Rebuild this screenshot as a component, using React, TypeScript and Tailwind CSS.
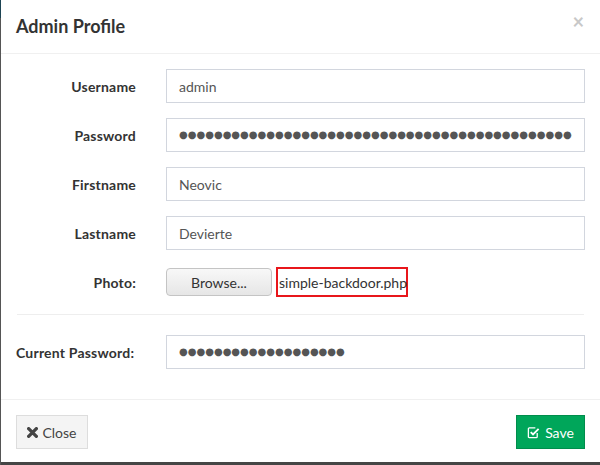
import React from "react";

const font = { fontFamily: "Lato, 'Open Sans', 'Noto Sans', sans-serif" };

function Row({ label, children, left }: { label: string; children: React.ReactNode; left?: boolean }) {
  return (
    <div className="flex items-center mb-[15px] h-[34px]">
      <div className={`w-[135px] shrink-0 pr-[15px] text-[14px] font-bold text-[#333] tracking-[0.2px] ${left ? "text-left" : "text-right"}`}>{label}</div>
      <div className="flex-1 pl-[15px] flex items-center h-full min-w-0">{children}</div>
    </div>
  );
}

function TextBox({ value }: { value: string }) {
  return (
    <div className="w-full h-[34px] border border-[#d2d6de] bg-white px-[12px] flex items-center text-[14px] text-[#555]">
      {value}
    </div>
  );
}

function Dots({ n }: { n: number }) {
  return (
    <div className="w-full min-w-0 h-[34px] border border-[#d2d6de] bg-white pl-[12px] pr-[12px] flex items-center overflow-hidden">
      <div
        className="flex-1 min-w-0 whitespace-nowrap overflow-hidden text-[#555] text-[10px] leading-none"
        style={{ fontFamily: "'DejaVu Sans', sans-serif" }}
      >
        {"●".repeat(n)}
      </div>
    </div>
  );
}

export default function App() {
  return (
    <div className="w-[600px] h-[465px] flex bg-[#454545] overflow-hidden" style={font}>
      <div className="w-[1px] flex flex-col shrink-0">
        <div className="h-[18px] bg-[#1d4454]" />
        <div className="flex-1 bg-[#555]" />
      </div>
      <div className="flex-1 min-w-0 h-[462px] bg-white flex flex-col">
        <div className="h-[54px] border-b border-[#f0f0f0] px-[15px] flex items-center justify-between">
          <div className="text-[18px] font-bold text-[#333] mt-[-1px]">Admin Profile</div>
          <div className="text-[20px] font-bold text-[#c8c8c8] leading-none mt-[-12px] mr-[1px]">×</div>
        </div>
        <div className="pt-[15px] px-[15px] pb-[15px] border-b border-[#f0f0f0]">
          <Row label="Username"><TextBox value="admin" /></Row>
          <Row label="Password"><Dots n={60} /></Row>
          <Row label="Firstname"><TextBox value="Neovic" /></Row>
          <Row label="Lastname"><TextBox value="Devierte" /></Row>
          <Row label="Photo:">
            <div className="flex items-center gap-[4px]">
              <div className="w-[106px] h-[28px] rounded-[4px] border border-[#c4c4c4] bg-gradient-to-b from-[#f8f8f8] to-[#e6e6e6] flex items-center justify-center text-[14px] text-[#333]">Browse...</div>
              <div className="h-[30px] w-[132px] border-2 border-[#e8161b] flex items-center pl-[1px] text-[14px] text-[#333] whitespace-nowrap">simple-backdoor.php</div>
            </div>
          </Row>
          <div className="h-[1px] bg-[#eeeeee] mt-[14px] mb-[20px] mx-[1px]" />
          <Row label="Current Password:" left><Dots n={19} /></Row>
        </div>
        <div className="flex-1 px-[15px] pt-[15px] flex justify-between items-start">
          <div className="h-[34px] w-[72px] border border-[#ddd] bg-[#f4f4f4] flex items-center justify-center gap-[4px] text-[14px] text-[#444]">
            <svg width="11" height="11" viewBox="0 0 10 10"><path d="M1.5 1.5 L8.5 8.5 M8.5 1.5 L1.5 8.5" stroke="#444" strokeWidth="3" strokeLinecap="round" /></svg>
            <span>Close</span>
          </div>
          <div className="h-[34px] w-[69px] border border-[#008d4c] bg-[#00a65a] flex items-center justify-center gap-[5px] text-[14px] text-white">
            <svg width="13" height="13" viewBox="0 0 14 14" fill="none">
              <path d="M11 7.5 V11.5 Q11 12.5 10 12.5 H2.5 Q1.5 12.5 1.5 11.5 V3 Q1.5 2 2.5 2 H9" stroke="white" strokeWidth="1.4" />
              <path d="M4 6.5 L6.5 9 L12.5 3" stroke="white" strokeWidth="2" />
            </svg>
            <span>Save</span>
          </div>
        </div>
      </div>
    </div>
  );
}
